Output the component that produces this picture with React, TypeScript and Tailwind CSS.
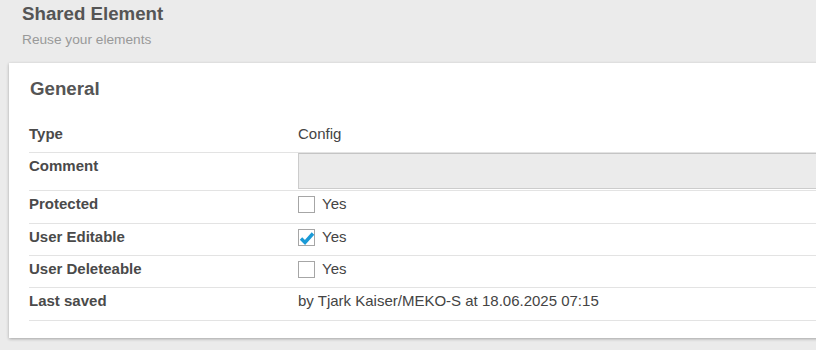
import React from 'react';

type Row = { label: string; kind: 'text' | 'comment' | 'check'; value?: string; checked?: boolean; h: string };

const rows: Row[] = [
  { label: 'Type', kind: 'text', value: 'Config', h: 'h-[32px]' },
  { label: 'Comment', kind: 'comment', h: 'h-[38px]' },
  { label: 'Protected', kind: 'check', checked: false, h: 'h-[33px]' },
  { label: 'User Editable', kind: 'check', checked: true, h: 'h-[32px]' },
  { label: 'User Deleteable', kind: 'check', checked: false, h: 'h-[32px]' },
  { label: 'Last saved', kind: 'text', value: 'by Tjark Kaiser/MEKO-S at 18.06.2025 07:15', h: 'h-[32px]' },
];

function Checkbox({ checked }: { checked?: boolean }) {
  return (
    <span className="relative inline-block w-[17px] h-[17px] border border-[#a6a6a6] bg-white shrink-0">
      {checked && (
        <svg viewBox="0 0 17 17" className="absolute left-0 top-0 w-[17px] h-[17px]">
          <path d="M2 8.5 L6 12.5 L14 3.5" fill="none" stroke="#1a9ad6" strokeWidth="3.4" strokeLinejoin="miter" />
        </svg>
      )}
    </span>
  );
}

export default function App() {
  return (
    <div className="w-[816px] h-[350px] overflow-hidden bg-[#ebebeb] font-['Liberation_Sans',Arial,sans-serif]">
      <div className="pl-[22px] pt-[3px]">
        <h1 className="text-[18.7px] leading-[22px] font-bold text-[#555]">Shared Element</h1>
        <p className="mt-[7px] text-[13.7px] leading-[16px] text-[#999]">Reuse your elements</p>
      </div>
      <div className="mt-[15px] ml-[9px] w-[840px] bg-white shadow-[0_1px_3px_rgba(0,0,0,0.3)] pl-[20px] pt-[15px] pb-[17px]">
        <h2 className="pl-[1px] text-[18.7px] leading-[22px] font-bold text-[#555]">General</h2>
        <div className="mt-[20px] text-[15px] leading-[18px] text-[#444]">
          {rows.map((r, i) => (
            <div key={r.label} className={`flex ${r.h} ${i > 0 ? 'border-t border-[#e3e3e3]' : ''} ${i === rows.length - 1 ? 'border-b border-[#e3e3e3] box-content' : ''}`}>
              <div className={`w-[269px] shrink-0 font-bold text-[#4a4a4a] ${i === 0 ? 'pt-[5px]' : 'pt-[4px]'}`}>
                {r.label}
              </div>
              <div className={`flex-1 ${i === 0 ? 'pt-[5px]' : 'pt-[4px]'}`}>
                {r.kind === 'text' && <span>{r.value}</span>}
                {r.kind === 'comment' && (
                  <div className="-mt-[4px] w-full h-[36px] bg-[#ebebeb] border-t border-b border-l border-[#cccccc] border-t-[#c4c4c4]" />
                )}
                {r.kind === 'check' && (
                  <div className="flex items-center gap-[7px]">
                    <Checkbox checked={r.checked} />
                    <span>Yes</span>
                  </div>
                )}
              </div>
            </div>
          ))}
        </div>
      </div>
    </div>
  );
}
